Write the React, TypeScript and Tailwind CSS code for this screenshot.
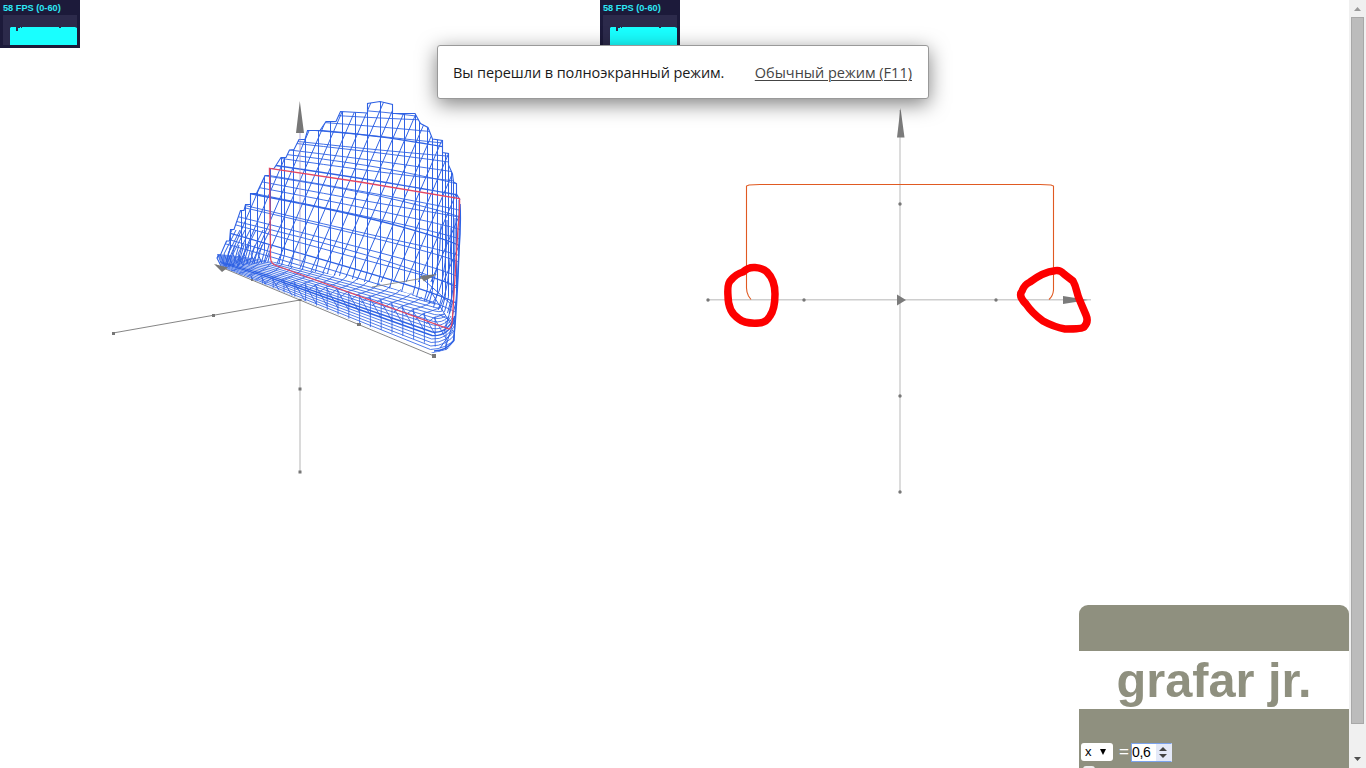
import React from "react";

const BLUE = "#2f62e4";

const SILHOUETTE =
  "M222 268 L217 258 L218.5 255 L220.500 255 L226.500 241 L229.500 241 L230.500 229.500 L234 229.500 L240.500 210.500 L244 210.500 L245.500 204.500 L250.500 204.500 L250.500 193.500 L256.500 193.500 L265 175.500 L269.500 175.500 L269.500 168.500 L274 168.500 L281 157.500 L286 157.500 L289.500 150 L294 149.500 L299 139.500 L305 139.500 L307.500 130.500 L320 130.500 L326 121.500 L336 121.500 L340.500 111.500 L367.500 113 L367.500 103.500 L380 101.500 L392.500 104.500 L392.500 113.500 L415 113.500 L420.500 123.500 L428 127.500 L432.500 139 L442.500 140.500 L442.500 152.500 L448.500 153.500 L448.500 165 L452.500 174 L453.500 182 L456.500 183.500 L456.500 194 L460 200";

const WALL = `${SILHOUETTE} L460 230 L457 300 L452 330 L430 304 L410 294 L377 285 L340 276 L310 271 L270 262 Z`;
const BAND =
  "M217 254 L240 256 L275 262 L310 270 L345 276 L380 283 L410 292 L434 302 L446 316 L456 316 L454 342 L447 350 L433 353 L222 267 Z";

// Height of a surface row at column x; rows fan out towards the floor.
const rowY = (base: number, x: number) => {
  const slope = 0.158 + (base - 168) * 0.0017;
  return base + (x - 270) * slope;
};

const rows = [
  107, 111, 119, 127, 128, 138, 141, 148, 154, 156.5, 165, 176, 178, 183,
  190, 197, 199, 211, 214, 225, 231, 234, 245, 252, 258,
];

const rowPath = (base: number, i: number) => {
  const bow = i % 4 === 0 ? 4 : i % 4 === 1 ? -1 : 1;
  return `M214 ${rowY(base, 214)} Q340 ${rowY(base, 340) - bow} 400 ${rowY(base, 400)} T462 ${rowY(base, 462) + bow * 1.5 + Math.max(0, base - 170) * 0.08}`;
};

const columns = [
  230.5, 241.5, 245.5, 250.5, 257.5, 264.5, 270.5, 281.5, 284.5, 293.500,
  305.5, 318.500, 330.500, 342.500, 355.5, 367.5, 380.5, 392.5, 404.5,
  415.500, 419.5, 427.500, 432.500, 437.5, 442.5, 445.5, 448.5, 451.5, 453.5,
  456.5,
];

const floorY = (x: number) => 257 + (x - 218) * 0.13 + Math.pow((x - 218) / 220, 3) * 19;

const diagonals = Array.from({ length: 24 }, (_, i) => 216 + i * 12.45);
const bandLines = Array.from({ length: 15 }, (_, i) => i);
const bandRibs = Array.from({ length: 21 }, (_, i) => 222 + i * 10.8);
const leftRibs = [220, 224, 228, 233, 238, 244, 251, 258];

function Surface() {
  return (
    <g fill="none" stroke={BLUE} strokeWidth="1">
      <clipPath id="wall"><path d={WALL} /></clipPath>
      <clipPath id="band"><path d={BAND} /></clipPath>
      <g clipPath="url(#wall)">
        {rows.map((b, i) => (
          <path key={b} d={rowPath(b, i)} strokeWidth={i % 6 === 4 ? 1.3 : 0.9} />
        ))}
        {columns.map((x) => (
          <path key={x} d={`M${x} 98 L${x} ${floorY(x) - 12} L${x - 4} ${floorY(x) + 3}`} />
        ))}
        {diagonals.map((x) => (
          <path key={x} d={`M${x + 20} 98 L${x - 24} 200 L${x - 59} 282`} />
        ))}
        {leftRibs.map((x) => (
          <path key={x} d={`M${x + 12} 230 L${x} 254 L${x + 5} 266 L${x + 11} 245`} />
        ))}
      </g>
      <g clipPath="url(#band)" strokeWidth="0.85">
        {bandLines.map((i) => (
          <path
            key={i}
            strokeWidth={i === 5 || i === 6 ? 1.4 : 0.85}
            d={`M212 ${264 - i * 0.8} L270 ${287 - i * 1.85} L${430 + i * 0.4} ${353 - i * 3.5} Q${446 + i * 0.5} ${352 - i * 3} 456 ${343 - i * 5}`}
          />
        ))}
        {bandRibs.map((x) => (
          <path
            key={x}
            d={`M${x + 18} ${floorY(x + 18) - 4} Q${x + 14} ${floorY(x) + 8} ${x - 4} ${floorY(x) + 13} L${x - 12} ${floorY(x) + 19} M${x - 4} ${floorY(x) + 13} L${x + 8} ${floorY(x) + 34} M${x + 8} ${floorY(x) + 16} V${floorY(x) + 46}`}
          />
        ))}
      </g>
      <path d={SILHOUETTE} strokeWidth="1.1" />
      <path d="M460 204 Q461 225 459 250 Q457 307 453.500 341 Q446 351 434 351" strokeWidth="1.5" />
      <path d="M459 200 Q460 256 456 300 L454 341 M455 218 Q456 304 444 332 M451 228 Q451 292 438 310 M447 220 Q447 286 433 302 M441 225 Q440 275 426 301 M424 280 L452 305 M430 290 L452 326 M440 348 L453 330 M445 349 L455 316" />
    </g>
  );
}

function SpaceView() {
  return (
    <svg className="block h-[600px] w-[600px]" viewBox="0 0 600 600">
      <path d="M300 300 V471" stroke="#cecece" strokeWidth="1.5" />
      <path d="M113 333 L300 300 M216 265 L434 356" stroke="#777" strokeWidth="0.9" />
      <Surface />
      <path d="M300 133 V266" stroke="#9c93cf" strokeWidth="1.3" opacity="0.6" />
      <path d="M372 287 L424 278" stroke="#777" strokeWidth="0.8" />
      <path d="M296 133 L299.800 101 L304 133 Z M214 264 L228 267.500 L222 272 Z M420 276 L437 274 L424 281.500 Z" fill="#777" />
      <path d="M269.500 168.300 L360 182 L459.500 198.500 Q460 210 458 228 L452.500 318 Q452 328 449 329 L276 265.500 Q271 264 270.500 258 Z" fill="none" stroke="#e34762" strokeWidth="1.3" />
      <path
        fill="#777"
        d="M112 332h3v3h-3zM212 314h3v3h-3zM298.500 299h3v2h-3zM298.500 387.500h3v3h-3zM298.500 470.500h3v3h-3zM357 323h4v3h-4zM432 354h4v4h-4zM251 279h2v2h-2z"
      />
    </svg>
  );
}

function PlaneView() {
  return (
    <svg className="block h-[600px] w-[600px]" viewBox="600 0 600 600">
      <path d="M708 299.800 H1091 M900 110 V491" stroke="#cecece" strokeWidth="1.400" />
      <path d="M897 137.500 L900.500 108 L904.500 137.500 Z M897 294.500 L906 300 L897 305.500 Z M1063 296 L1088 300 L1063 304 Z" fill="#7b7b7b" />
      <g fill="#777">
        {[708, 804, 996].map((x) => <circle key={x} cx={x} cy="300" r="1.7" />)}
        {[204, 396, 492].map((y) => <circle key={y} cx="900" cy={y} r="1.7" />)}
      </g>
      <path d="M751 299.500 L748.500 296 Q746.500 292 746.500 288 V186 L749 185 L760 184.500 H1040 L1051 185 L1053.500 186 V290 Q1053 296 1049 299.500" fill="none" stroke="#e05a22" strokeWidth="1.1" />
      <g fill="none" stroke="#fd0000" strokeWidth="7.500" strokeLinejoin="round">
        <path d="M755 267.500 Q763 268 767 272 Q775 280 775 294 Q775 309 770 316 Q766 323 759 323 Q745 324 739 319 Q728 312 728 296 Q727 283 731 280 Q736 274 743 272 Q748 267 755 267.500 Z" />
        <path d="M1055 270.700 Q1060 269.500 1064 274 L1073 281 C1077 288 1076 292 1080 301 L1086 315 Q1089 322 1084 327 Q1082 329 1065 329 Q1054 327 1043 321 Q1032 313 1026 304 Q1018 296 1022 291 Q1024 285 1030 282 Q1043 272 1055 270.700 Z" />
      </g>
    </svg>
  );
}

function Stats() {
  return (
    <div className="absolute left-0 top-0 h-12 w-20 bg-[#1c1a3a] px-[3px] pt-px font-['Liberation_Sans'] text-[9.2px] font-bold leading-[14px] text-[#2de9f5]">
      <div className="whitespace-nowrap">58 FPS (0-60)</div>
      <svg className="block h-[30px] w-[74px]" viewBox="0 0 74 30">
        <path fill="#2c2a4b" d="M0 0h74v30H0z" />
        <path fill="#19ffff" d="M7 13 l1-1h5v4h2v-3h2v-1h1v1h1v-1h37v1h2v-1h14l2 1v17H7z" />
      </svg>
    </div>
  );
}

function FullscreenNotice() {
  return (
    <div className="absolute left-[437px] top-[45px] flex h-[54px] w-[492px] items-center justify-between rounded-[3px] border border-[#999] bg-white pl-[15px] pr-4 pt-px font-['Open_Sans','Noto_Sans',sans-serif] text-[14.5px] shadow-[0_5px_20px_rgba(0,0,0,0.5)]">
      <span className="whitespace-nowrap tracking-[-0.08px] text-[#1a1a1a]">Вы перешли в полноэкранный режим.</span>
      <span className="whitespace-nowrap tracking-[0.01px] text-[#444] underline decoration-1 underline-offset-2">Обычный режим (F11)</span>
    </div>
  );
}

function ControlPanel() {
  return (
    <aside className="absolute bottom-0 right-0 flex h-[163px] w-[270px] flex-col overflow-hidden rounded-t-[9px] bg-[#8f907f] font-['Liberation_Sans',sans-serif]">
      <h1 className="mt-[46px] h-[58px] shrink-0 bg-white text-center text-[48.700px] font-bold leading-[59px] text-[#8f907f]">grafar jr.</h1>
      <div className="mt-[33px] flex h-[20px] shrink-0 items-center pl-0.5 text-[14px] text-black">
        <div className="flex h-[18px] w-8 items-center justify-between rounded-[3px] bg-white pl-1 pr-1.5 text-[13px]">
          <span>x</span>
          <svg className="h-2 w-2" viewBox="0 0 8 8"><path d="M1 1h6L4 7z" /></svg>
        </div>
        <span className="ml-[6px] w-[10px] text-[17px] text-white">=</span>
        <div className="ml-[2px] flex h-[19px] w-[41px] items-center justify-between border border-[#7ba3ee] border-r-[#e4e9f8] bg-white text-[14px]">
          <span className="tracking-[-0.4px]">0,6</span>
          <svg className="h-[17px] w-[15px]" viewBox="0 0 15 17">
            <path fill="#e4e9f8" d="M0 0h15v17H0z" />
            <path fill="#444" d="M3 7h8L7 3zM3 10h8l-4 4z" />
          </svg>
        </div>
      </div>
      <div className="ml-[4px] mt-[4px] h-3 w-3 shrink-0 rounded-[3px] bg-[#eee]" />
    </aside>
  );
}

function Scrollbar() {
  return (
    <div className="flex h-full w-[17px] shrink-0 flex-col items-center bg-[#f0f0f0]">
      <svg className="h-[17px] w-[17px] shrink-0" viewBox="0 0 17 17"><path fill="#999" d="M5 11h7l-3.500-4z" /></svg>
      <div className="h-[707px] w-[13px] shrink-0 border border-[#a8a8a8] bg-[#bcbcbc]" />
      <div className="flex-1" />
      <svg className="h-[17px] w-[17px] shrink-0" viewBox="0 0 17 17"><path fill="#505050" d="M5 6h7l-3.500 4z" /></svg>
    </div>
  );
}

export default function App() {
  return (
    <div className="flex h-[768px] w-[1366px] overflow-hidden bg-white">
      <main className="relative flex flex-1 items-start">
        <section className="relative"><SpaceView /><Stats /></section>
        <section className="relative"><PlaneView /><Stats /></section>
        <FullscreenNotice />
        <ControlPanel />
      </main>
      <Scrollbar />
    </div>
  );
}
